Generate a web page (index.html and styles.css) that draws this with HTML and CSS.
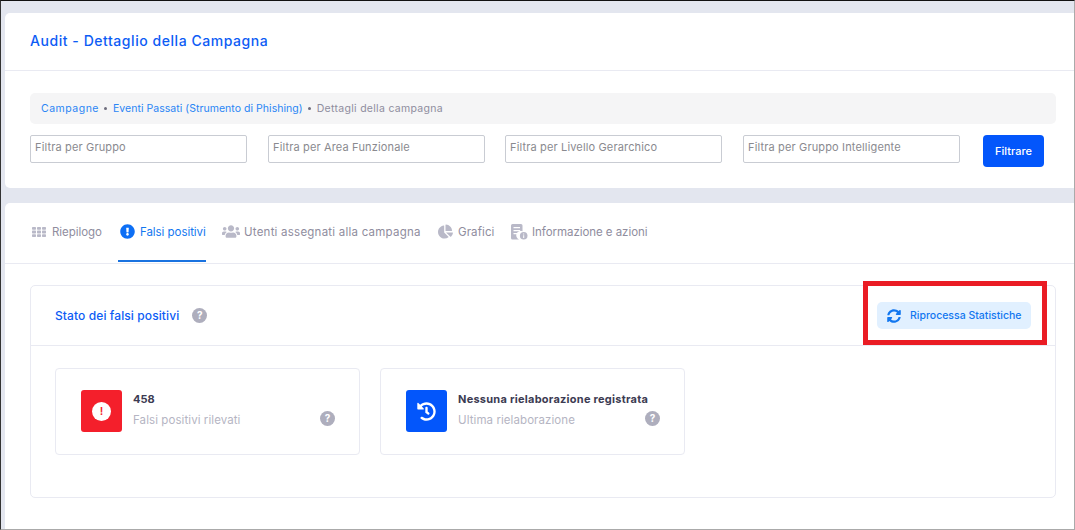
FILE: index.html
```html
<!DOCTYPE html>
<html lang="it">

<head>
    <meta charset="UTF-8">
    <meta name="viewport" content="width=device-width, initial-scale=1.0">
    <title>Audit - Dettaglio della Campagna</title>
    <link rel="stylesheet" href="styles.css">
</head>

<body>
    <main class="page">
        <section class="card card-top">
            <header class="card-head">
                <h1>Audit - Dettaglio della Campagna</h1>
            </header>
            <div class="card-body">
                <nav class="breadcrumb">
                    <a class="crumb-first">Campagne</a><i></i><a>Eventi Passati (Strumento di Phishing)</a><i></i><span>Dettagli della campagna</span>
                </nav>
                <form class="filters">
                    <input type="text" placeholder="Filtra per Gruppo">
                    <input type="text" placeholder="Filtra per Area Funzionale">
                    <input type="text" placeholder="Filtra per Livello Gerarchico">
                    <input type="text" placeholder="Filtra per Gruppo Intelligente">
                    <button type="button" class="btn-filter">Filtrare</button>
                </form>
            </div>
        </section>

        <section class="card card-main">
            <ul class="tabs">
                <li class="tab tab-1">
                    <svg class="tab-icon" width="14" height="10" viewBox="0 0 14 10">
                        <rect x="0" y="0" width="4" height="2.8" rx=".7" /><rect x="5" y="0" width="4" height="2.8" rx=".7" /><rect x="10" y="0" width="4" height="2.8" rx=".7" />
                        <rect x="0" y="3.6" width="4" height="2.8" rx=".7" /><rect x="5" y="3.6" width="4" height="2.8" rx=".7" /><rect x="10" y="3.6" width="4" height="2.8" rx=".7" />
                        <rect x="0" y="7.2" width="4" height="2.8" rx=".7" /><rect x="5" y="7.2" width="4" height="2.8" rx=".7" /><rect x="10" y="7.2" width="4" height="2.8" rx=".7" />
                    </svg>
                    Riepilogo
                </li>
                <li class="tab tab-2 active">
                    <svg class="tab-icon" width="15" height="15" viewBox="0 0 512 512"><path d="M504 256c0 136.997-111.043 248-248 248S8 392.997 8 256C8 119.083 119.043 8 256 8s248 111.083 248 248zm-248 50c-25.405 0-46 20.595-46 46s20.595 46 46 46 46-20.595 46-46-20.595-46-46-46zm-43.673-165.346l7.418 136c.347 6.364 5.609 11.346 11.982 11.346h48.546c6.373 0 11.635-4.982 11.982-11.346l7.418-136c.375-6.874-5.098-12.654-11.982-12.654h-63.383c-6.884 0-12.356 5.78-11.981 12.654z" /></svg>
                    Falsi positivi
                </li>
                <li class="tab tab-3">
                    <svg class="tab-icon" width="18" height="15" viewBox="0 0 640 512"><path d="M96 224c35.3 0 64-28.7 64-64s-28.7-64-64-64-64 28.7-64 64 28.7 64 64 64zm448 0c35.3 0 64-28.7 64-64s-28.7-64-64-64-64 28.7-64 64 28.7 64 64 64zm32 32h-64c-17.6 0-33.5 7.1-45.1 18.6 40.3 22.1 68.9 62 75.1 109.4h66c17.7 0 32-14.3 32-32v-32c0-35.3-28.7-64-64-64zm-256 0c61.9 0 112-50.1 112-112S381.9 32 320 32 208 82.1 208 144s50.1 112 112 112zm76.8 32h-8.3c-20.8 10-43.9 16-68.5 16s-47.6-6-68.5-16h-8.3C179.6 288 128 339.6 128 403.2V432c0 26.5 21.5 48 48 48h288c26.5 0 48-21.5 48-48v-28.8c0-63.6-51.6-115.2-115.2-115.2zm-223.7-13.4C161.5 263.1 145.6 256 128 256H64c-35.3 0-64 28.7-64 64v32c0 17.7 14.3 32 32 32h65.9c6.3-47.4 34.9-87.3 75.2-109.4z" /></svg>
                    Utenti assegnati alla campagna
                </li>
                <li class="tab tab-4">
                    <svg class="tab-icon" width="15" height="15" viewBox="0 0 544 512"><path d="M527.79 288H290.5l158.03 158.03c6.04 6.04 15.98 6.53 22.19.68 38.7-36.46 65.32-85.61 73.13-140.86 1.34-9.46-6.51-17.85-16.06-17.85zm-15.83-64.8C503.72 103.74 408.26 8.28 288.8.04 279.68-.59 272 7.1 272 16.24V240h223.77c9.14 0 16.82-7.68 16.19-16.8zM224 288V50.71c0-9.55-8.39-17.4-17.84-16.06C86.99 51.49-4.1 155.6.14 280.37 4.5 408.51 114.83 513.59 243.03 511.98c50.4-.63 96.97-16.87 135.26-44.03 7.9-5.6 8.42-17.23 1.57-24.08L224 288z" /></svg>
                    Grafici
                </li>
                <li class="tab tab-5">
                    <svg class="tab-icon" width="17" height="16" viewBox="0 0 17 16">
                        <path d="M1.5 0h8.5a1.500 1.500 0 0 1 1.500 1.500v5.700a4.500 4.500 0 0 0-3.500 8.300h-6.500a1.500 1.500 0 0 1-1.500-1.500v-12.500a1.500 1.500 0 0 1 1.500-1.500z" />
                        <path fill="#fff" d="M2.500 3h6.500v1.300h-6.500zM2.500 6h6.500v1.300h-6.500zM2.500 9h4v1.300h-4z" />
                        <circle cx="12.700" cy="11.700" r="3.800" />
                        <path fill="#fff" d="M12.200 9.500h1v1h-1zM12.200 11.200h1v2.800h-1z" />
                    </svg>
                    Informazione e azioni
                </li>
            </ul>

            <div class="panel-wrap">
                <div class="panel">
                    <div class="panel-head">
                        <h2>Stato dei falsi positivi</h2>
                        <span class="help">?</span>
                        <button type="button" class="btn-light">
                            <svg width="14" height="14" viewBox="0 0 512 512"><path d="M370.72 133.28C339.458 104.008 298.888 87.962 255.848 88c-77.458.068-144.328 53.178-162.791 126.85-1.344 5.363-6.122 9.15-11.651 9.15H24.103c-7.498 0-13.194-6.807-11.807-14.176C33.933 94.924 134.813 8 256 8c66.448 0 126.791 26.136 171.315 68.685L463.03 40.97C478.149 25.851 504 36.559 504 57.941V192c0 13.255-10.745 24-24 24H345.941c-21.382 0-32.09-25.851-16.971-40.971l41.75-41.749zM32 296h134.059c21.382 0 32.09 25.851 16.971 40.971l-41.75 41.75c31.262 29.273 71.835 45.319 114.876 45.28 77.418-.07 144.315-53.144 162.787-126.849 1.344-5.363 6.122-9.15 11.651-9.15h57.304c7.498 0 13.194 6.807 11.807 14.176C478.067 417.076 377.187 504 256 504c-66.448 0-126.791-26.136-171.315-68.685L48.970 471.030C33.851 486.149 8 475.441 8 454.059V320c0-13.255 10.745-24 24-24z" /></svg>
                            Riprocessa Statistiche
                        </button>
                    </div>
                    <div class="panel-body">
                        <div class="stat">
                            <div class="stat-icon red">
                                <span class="alert-dot">!</span>
                            </div>
                            <div class="stat-text">
                                <strong>458</strong>
                                <span>Falsi positivi rilevati</span>
                            </div>
                            <span class="help stat-help">?</span>
                        </div>
                        <div class="stat">
                            <div class="stat-icon blue">
                                <svg width="19" height="19" viewBox="0 0 512 512"><path d="M504 255.531c.253 136.640-111.180 248.372-247.820 248.468-59.015.042-113.223-20.530-155.822-54.911-11.077-8.940-11.905-25.541-1.839-35.607l11.267-11.267c8.609-8.609 22.353-9.551 31.891-1.984C173.062 425.135 212.781 440 256 440c101.705 0 184-82.311 184-184 0-101.705-82.311-184-184-184-48.814 0-93.149 18.969-126.068 49.932l50.754 50.754c10.080 10.080 2.941 27.314-11.313 27.314H24c-8.837 0-16-7.163-16-16V38.627c0-14.254 17.234-21.393 27.314-11.314l49.372 49.372C129.209 34.136 189.552 8 256 8c136.810 0 247.747 110.780 248 247.531zm-180.912 78.784l9.823-12.630c8.138-10.463 6.253-25.542-4.210-33.679L288 256.349V152c0-13.255-10.745-24-24-24h-16c-13.255 0-24 10.745-24 24v135.651l65.409 50.874c10.463 8.137 25.541 6.253 33.679-4.210z" /></svg>
                            </div>
                            <div class="stat-text">
                                <strong class="long">Nessuna rielaborazione registrata</strong>
                                <span>Ultima rielaborazione</span>
                            </div>
                            <span class="help stat-help">?</span>
                        </div>
                    </div>
                </div>
                <div class="highlight"></div>
            </div>
        </section>
    </main>
</body>

</html>
```

FILE: styles.css
```css
* {
    box-sizing: border-box;
    margin: 0;
    padding: 0;
}

html,
body {
    height: 100%;
    overflow: hidden;
}

body {
    background: #e3e6ef;
    font-family: Inter, "Noto Sans", sans-serif;
    font-size: 11px;
    color: #8f8d9e;
}

.page {
    height: 530px;
    border-top: 1px solid #111;
    border-left: 1px solid #333;
    border-right: 1px solid #aaa;
    border-bottom: 1px solid #aaa;
    padding: 12px 0 0 4px;
    display: flex;
    flex-direction: column;
    gap: 15px;
}

.card {
    background: #fff;
    border-radius: 5px 0 0 5px;
}

.card-top {
    height: 175px;
}

.card-head {
    height: 58px;
    border-bottom: 1px solid #e9eaf2;
    padding: 0 25px 2px;
    display: flex;
    align-items: center;
}

h1 {
    font-size: 14px;
    font-weight: 500;
    color: #0d5cf5;
    letter-spacing: .55px;
}

.card-body {
    padding: 22px 18px 0 25px;
}

.breadcrumb {
    height: 31px;
    background: #f5f5f6;
    border-radius: 5px;
    padding: 0 11px;
    display: flex;
    align-items: center;
    font-size: 10.500px;
    letter-spacing: .04px;
    color: #8f8d9e;
}

.breadcrumb a {
    color: #2a85f5;
}

.breadcrumb .crumb-first {
    letter-spacing: .5px;
}

.breadcrumb span {
    letter-spacing: .3px;
}

.breadcrumb i {
    width: 3px;
    height: 3px;
    border-radius: 50%;
    background: #6e6d7d;
    margin: 0 5.500px;
}

.filters {
    display: flex;
    align-items: flex-start;
    margin-top: 11px;
}

.filters input {
    width: 217px;
    height: 28px;
    margin-right: 21px;
    border: 1px solid #c9ccd3;
    border-radius: 2px;
    padding: 0 4px 4px;
    font: inherit;
    font-size: 11px;
    letter-spacing: .15px;
    outline: 0;
}

.filters input::placeholder {
    color: #8a8a8f;
    opacity: 1;
}

.filters input:nth-child(2) {
    margin-right: 20px;
}

.btn-filter {
    width: 61px;
    height: 32px;
    margin-left: 2px;
    border: 0;
    border-radius: 4px;
    background: #0356fb;
    color: #fff;
    font: inherit;
    font-size: 11px;
    font-weight: 500;
}

.card-main {
    flex: 1;
    border-radius: 5px 0 0 0;
}

.tabs {
    list-style: none;
    height: 61px;
    border-bottom: 1px solid #e9eaf2;
    padding-left: 27px;
    display: flex;
}

.tab {
    height: 60px;
    padding-top: 19px;
    display: flex;
    align-items: flex-start;
    gap: 6px;
    font-size: 11.500px;
    line-height: 20px;
    color: #8f8d9e;
    white-space: nowrap;
}

.tab-icon {
    fill: #b9b9c8;
    flex: none;
    margin-top: 2px;
}

.tab-1 .tab-icon {
    margin-top: 5px;
}

.tab-1 {
    width: 86px;
    letter-spacing: -.05px;
}

.tab-2 {
    width: 88px;
    margin-right: 16px;
    border-bottom: 2px solid #1a73e0;
    color: #1277f0;
    padding-left: 2px;
    height: 59px;
    letter-spacing: -.05px;
    gap: 5px;
}

.tab-2 .tab-icon {
    fill: #0d6ff5;
}

.tab-3 {
    width: 216px;
    gap: 4px;
    letter-spacing: .23px;
}

.tab-4 {
    width: 73px;
    gap: 5px;
    letter-spacing: .1px;
}

.tab-5 {
    gap: 4px;
    letter-spacing: -.05px;
}

.panel-wrap {
    padding: 21px 18px 0 25px;
    position: relative;
}

.panel {
    height: 213px;
    border: 1px solid #e9eaf2;
    border-radius: 5px;
}

.panel-head {
    height: 60px;
    border-bottom: 1px solid #e9eaf2;
    padding: 0 24px;
    display: flex;
    align-items: center;
}

h2 {
    font-size: 12px;
    font-weight: 500;
    color: #0d5cf5;
    letter-spacing: .1px;
}

.help {
    width: 15px;
    height: 15px;
    border-radius: 50%;
    background: #aeaebd;
    color: #fff;
    font-size: 10px;
    line-height: 15px;
    font-weight: 700;
    text-align: center;
    flex: none;
}

.panel-head .help {
    margin-left: 13px;
}

.btn-light {
    margin-left: auto;
    width: 154px;
    height: 27px;
    border: 0;
    border-radius: 5px;
    background: #e1f0ff;
    color: #1277f0;
    font: inherit;
    font-size: 10.500px;
    font-weight: 500;
    display: flex;
    align-items: center;
    gap: 9px;
    padding-left: 10px;
}

.btn-light svg {
    fill: #1277f0;
}

.panel-body {
    padding: 22px 24px 0 24px;
    display: flex;
    gap: 20px;
}

.stat {
    width: 305px;
    height: 87px;
    border: 1px solid #e9eaf2;
    border-radius: 4px;
    padding: 21px 24px 0 25px;
    display: flex;
}

.stat-icon {
    width: 41px;
    height: 42px;
    border-radius: 3px;
    display: flex;
    align-items: center;
    justify-content: center;
    flex: none;
}

.stat-icon svg {
    fill: #fff;
}

.red {
    background: #f41f2b;
}

.blue {
    background: #0356fb;
}

.alert-dot {
    width: 19px;
    height: 19px;
    border-radius: 50%;
    background: #fff;
    color: #f41f2b;
    font-size: 11px;
    line-height: 19px;
    font-weight: 600;
    text-align: center;
}

.stat-text {
    margin-left: 11px;
    display: flex;
    flex-direction: column;
    gap: 3px;
    flex: 1;
    min-width: 0;
    white-space: nowrap;
}

.stat-text strong {
    font-size: 11px;
    line-height: 18px;
    font-weight: 700;
    color: #3c3b52;
}

.stat-text .long {
    letter-spacing: .25px;
}

.stat-text span {
    font-size: 11.500px;
    line-height: 18px;
    letter-spacing: .08px;
    color: #b5b5c3;
}

.stat-help {
    margin-top: 21px;
}

/* annotazione rossa sopra il pulsante */
.highlight {
    position: absolute;
    top: 17px;
    right: 27px;
    width: 184px;
    height: 64px;
    border: 5px solid #ea1c24;
}
```
